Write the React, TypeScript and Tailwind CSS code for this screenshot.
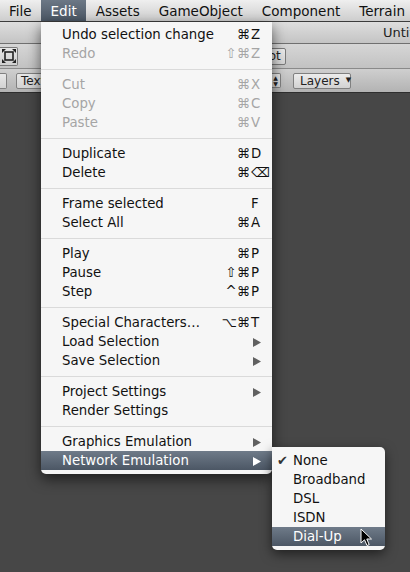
import clsx from "clsx";

type MenuItem =
  | { sep: true }
  | {
      label: string;
      mods?: string;
      keyChar?: string;
      disabled?: boolean;
      sub?: boolean;
      active?: boolean;
    };

const editItems: MenuItem[] = [
  { label: "Undo selection change", mods: "⌘", keyChar: "Z" },
  { label: "Redo", mods: "⇧⌘", keyChar: "Z", disabled: true },
  { sep: true },
  { label: "Cut", mods: "⌘", keyChar: "X", disabled: true },
  { label: "Copy", mods: "⌘", keyChar: "C", disabled: true },
  { label: "Paste", mods: "⌘", keyChar: "V", disabled: true },
  { sep: true },
  { label: "Duplicate", mods: "⌘", keyChar: "D" },
  { label: "Delete", mods: "⌘", keyChar: "⌫" },
  { sep: true },
  { label: "Frame selected", mods: "", keyChar: "F" },
  { label: "Select All", mods: "⌘", keyChar: "A" },
  { sep: true },
  { label: "Play", mods: "⌘", keyChar: "P" },
  { label: "Pause", mods: "⇧⌘", keyChar: "P" },
  { label: "Step", mods: "^⌘", keyChar: "P" },
  { sep: true },
  { label: "Special Characters…", mods: "⌥⌘", keyChar: "T" },
  { label: "Load Selection", sub: true },
  { label: "Save Selection", sub: true },
  { sep: true },
  { label: "Project Settings", sub: true },
  { label: "Render Settings" },
  { sep: true },
  { label: "Graphics Emulation", sub: true },
  { label: "Network Emulation", sub: true, active: true },
];

const networkModes = ["None", "Broadband", "DSL", "ISDN", "Dial-Up"];

const topMenus = ["File", "Edit", "Assets", "GameObject", "Component", "Terrain"];

function SubArrow({ white }: { white?: boolean }) {
  return (
    <svg width="8" height="9" viewBox="0 0 8 9" className="ml-[3px]">
      <path d="M0 0 L8 4.5 L0 9 Z" fill={white ? "#ffffff" : "#606060"} />
    </svg>
  );
}

function NetworkSubmenu() {
  return (
    <div className="absolute left-full top-[-4px] w-[113px] rounded-[5px] rounded-tl-none bg-[#f6f6f6] py-[4px] text-[#111] shadow-[0_4px_12px_rgba(0,0,0,0.55)]">
      {networkModes.map((mode, i) => (
        <div
          key={mode}
          className={clsx(
            "flex h-[19px] items-center pt-[1px]",
            mode === "Dial-Up" && "bg-linear-to-b from-[#6f7b89] to-[#4c5765] text-white"
          )}
        >
          <span className="w-[21px] pl-[5px] text-[13px] text-[#333]">{i === 0 ? "✔" : ""}</span>
          <span className="whitespace-nowrap">{mode}</span>
        </div>
      ))}
    </div>
  );
}

function EditMenu() {
  return (
    <div className="absolute left-[41px] top-[22px] w-[231px] rounded-b-[5px] bg-[#f6f6f6] pb-[4px] pt-[3px] text-[#111] shadow-[0_5px_14px_rgba(0,0,0,0.6)]">
      {editItems.map((item, i) => {
        if ("sep" in item) {
          return (
            <div key={i} className="flex h-[12px] items-center">
              <div className="h-px w-full bg-[#dadada]" />
            </div>
          );
        }
        const hasShortcut = item.keyChar !== undefined;
        return (
          <div
            key={i}
            className={clsx(
              "relative flex h-[19px] items-center pl-[21px] pr-[8px] pt-[1px]",
              item.active && "bg-linear-to-b from-[#6f7b89] to-[#4c5765] text-white",
              item.disabled && "text-[#a5a5a5]"
            )}
          >
            <span className="flex-1 whitespace-nowrap">{item.label}</span>
            {hasShortcut && (
              <>
                <span className="whitespace-nowrap">{item.mods}</span>
                <span className="w-[14px] pl-[1px]">{item.keyChar}</span>
              </>
            )}
            {item.sub && (
              <span className="flex w-[14px]">
                <SubArrow white={item.active} />
              </span>
            )}
            {item.active && <NetworkSubmenu />}
          </div>
        );
      })}
    </div>
  );
}

function MoveToolIcon() {
  return (
    <svg width="14" height="14" viewBox="0 0 14 14">
      <rect x="3" y="3" width="8" height="8" fill="none" stroke="#222" strokeWidth="1.6" />
      <path d="M0 0 H4 L0 4 Z M14 0 V4 L10 0 Z M0 14 V10 L4 14 Z M14 14 H10 L14 10 Z" fill="#222" />
    </svg>
  );
}

function Cursor() {
  return (
    <svg
      width="13"
      height="19"
      viewBox="0 0 13 19"
      className="absolute left-[360px] top-[528px]"
    >
      <path
        d="M1 1 L1 15 L4.5 11.8 L7 17.5 L9.2 16.6 L6.8 11 L11.5 11 Z"
        fill="#000"
        stroke="#fff"
        strokeWidth="1"
        strokeLinejoin="round"
      />
    </svg>
  );
}

export default function App() {
  return (
    <div className="relative flex h-[572px] w-[410px] flex-col overflow-hidden bg-[#464646] font-['DejaVu_Sans',sans-serif] text-[13.3px]">
      {/* menu bar */}
      <div className="flex h-[22px] shrink-0 items-stretch border-b border-[#3c3c3c] bg-linear-to-b from-[#efefef] to-[#cdcdcd] text-[13.5px] text-[#111]">
        {topMenus.map((name, i) => (
          <div
            key={name}
            className={clsx(
              "flex items-center whitespace-nowrap px-[9.5px] pt-[1px]",
              i === 0 && "pl-[9px]",
              name === "Edit" && "bg-linear-to-b from-[#6c7886] to-[#4b5664] text-white"
            )}
          >
            {name}
          </div>
        ))}
      </div>

      {/* window title */}
      <div className="flex h-[22px] shrink-0 items-center border-b border-[#707070] bg-linear-to-b from-[#dedede] to-[#c4c4c4] text-[13px] text-[#222]">
        <span className="ml-[383px] whitespace-nowrap">Untitled</span>
      </div>

      {/* tool bar */}
      <div className="flex h-[25px] shrink-0 items-center border-b border-[#8a8a8a] bg-linear-to-b from-[#d6d6d6] to-[#c2c2c2]">
        <div className="flex h-[19px] w-[18px] items-center justify-center rounded-r-[2px] border border-l-0 border-[#7a7a7a] bg-linear-to-b from-[#e6e6e6] to-[#cfcfcf]">
          <MoveToolIcon />
        </div>
        <div className="ml-[228px] flex h-[17px] w-[40px] items-center justify-center rounded-[2px] border border-[#7a7a7a] bg-linear-to-b from-[#ececec] to-[#d4d4d4] text-[12px] text-[#222]">
          Pivot
        </div>
      </div>

      {/* scene toolbar */}
      <div className="flex h-[24px] shrink-0 items-center border-b border-[#2e2e2e] bg-linear-to-b from-[#cfcfcf] to-[#b3b3b3] text-[12px] text-[#222]">
        <div className="h-[16px] w-[7px] rounded-r-[2px] border border-l-0 border-[#808080] bg-linear-to-b from-[#e8e8e8] to-[#d2d2d2]" />
        <div className="ml-[9px] flex h-[16px] w-[60px] items-center rounded-[2px] border border-[#808080] bg-linear-to-b from-[#e8e8e8] to-[#d2d2d2] px-[4px]">
          Textured
        </div>
        <div className="ml-[195px] flex h-[15px] w-[10px] flex-col items-center justify-center rounded-r-[2px] border border-l-0 border-[#808080] bg-linear-to-b from-[#e8e8e8] to-[#d2d2d2] text-[6px] leading-[6px]">
          <span>▲</span>
          <span>▼</span>
        </div>
        <div className="ml-[12px] flex h-[16px] w-[58px] items-center gap-[6px] rounded-[2px] border border-[#808080] bg-linear-to-b from-[#ececec] to-[#d2d2d2] pl-[6px]">
          <span>Layers</span>
          <span className="text-[7px]">▼</span>
        </div>
      </div>

      {/* scene view */}
      <div className="flex-1 bg-[#474747]" />

      <EditMenu />
      <Cursor />
    </div>
  );
}
